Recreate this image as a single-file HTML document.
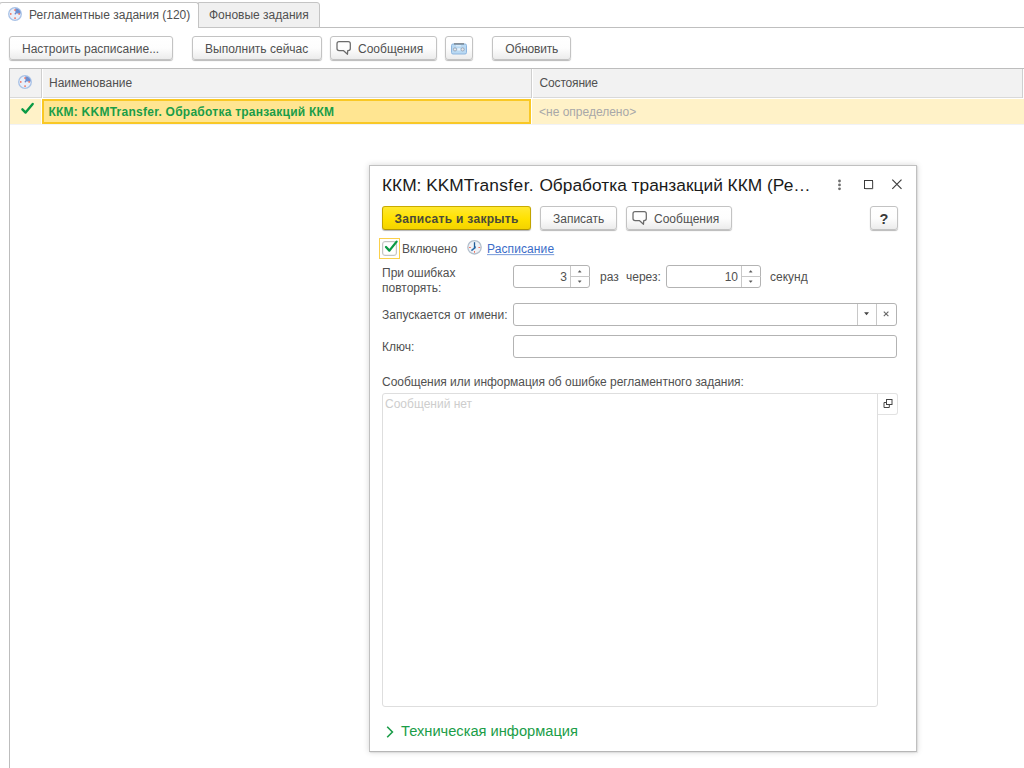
<!DOCTYPE html>
<html lang="ru">
<head>
<meta charset="utf-8">
<title>Регламентные задания</title>
<style>
*{box-sizing:border-box;margin:0;padding:0}
html,body{width:1024px;height:768px;overflow:hidden;background:#fff}
body{font-family:"Liberation Sans",Arial,sans-serif;font-size:12px;color:#505050;position:relative}
.abs{position:absolute}
.t{position:absolute;white-space:nowrap;line-height:16px;height:16px;transform:scaleY(1.07);transform-origin:0 12px}
.t.big{transform:none}
/* tabs */
#tabline{left:0;top:27px;width:1024px;height:1px;background:#bfbfbf}
#tab1{left:-1px;top:2px;width:200px;height:26px;border:1px solid #c4c4c4;border-bottom:none;border-radius:3px 3px 0 0;background:#fff}
#tab2{left:198px;top:2px;width:122px;height:26px;border:1px solid #c4c4c4;border-radius:0 3px 0 0;background:#f0f0f0}
/* buttons */
.btn{position:absolute;height:24px;border:1px solid #c3c3c3;border-radius:3px;background:linear-gradient(#ffffff 0%,#fdfdfd 50%,#ececec 100%);box-shadow:0 1px 1px rgba(0,0,0,.28);}
.btn .t{top:4px}
/* table */
#tbl{left:9px;top:68px;width:1020px;height:705px;border:1px solid #bdbdbd;background:#fff}
#thead{left:10px;top:69px;width:1014px;height:28px;background:#f2f2f2}
#theadline{left:10px;top:97px;width:1014px;height:1px;background:#d9d9d9}
.vsep{position:absolute;top:69px;width:1px;height:29px;background:#cfcfcf;box-shadow:1px 0 0 #fff}
#row{left:10px;top:99px;width:1014px;height:25px;background:#fff2c8}
#cell{left:42px;top:99px;width:489px;height:25px;border:2px solid #f9c825;background:#ffe591;box-shadow:-1px 0 0 #fff,1px 0 0 #fff}
/* dialog */
#dlg{left:369px;top:165px;width:548px;height:587px;background:#fff;border:1px solid #c0c0c0;border-bottom-color:#b6b6b6;box-shadow:0 0 6px rgba(0,0,0,.17),1px 1px 1px rgba(0,0,0,.06)}
.inp{position:absolute;height:23px;border:1px solid #b3b3b3;border-radius:3px;background:#fff}
#bsave{background:linear-gradient(#ffe830 0%,#ffe100 55%,#f3d300 100%);border-color:#c9ab00 #c2a400 #b09400 #c2a400;box-shadow:0 1px 1px rgba(0,0,0,.3)}
</style>
</head>
<body>
<!-- tabs -->
<div class="abs" id="tabline"></div>
<div class="abs" id="tab2"></div>
<div class="abs" id="tab1"></div>
<svg class="abs" style="left:7px;top:6px" width="16" height="16" viewBox="0 0 16 16"><circle cx="8" cy="8" r="6.3" fill="#e9effa" stroke="#a9c2e6" stroke-width="1.3"/><path d="M8.4 7.6V2.2A5.6 5.6 0 0 1 13.8 7.6Z" fill="#6d8fd0"/><circle cx="8.3" cy="7.7" r=".7" fill="#5577c4"/><rect x="7.3" y="3.3" width="1.5" height="1.5" fill="#f4674f"/><rect x="3" y="7.2" width="1.5" height="1.5" fill="#f4674f"/><rect x="11.4" y="7.2" width="1.5" height="1.5" fill="#f4674f"/><rect x="7.3" y="11.4" width="1.5" height="1.5" fill="#f4674f"/></svg>
<div class="t" style="left:29px;top:7px">Регламентные задания (120)</div>
<div class="t" style="left:209px;top:7px">Фоновые задания</div>

<!-- toolbar -->
<div class="btn" style="left:9px;top:36px;width:164px"><div class="t" style="left:12px">Настроить расписание...</div></div>
<div class="btn" style="left:192px;top:36px;width:130px"><div class="t" style="left:12px">Выполнить сейчас</div></div>
<div class="btn" style="left:330px;top:36px;width:107px"><svg class="abs" style="left:5px;top:3px" width="18" height="18" viewBox="0 0 18 18"><path d="M3.1 1.6H12.2Q14.3 1.6 14.3 3.7V8.6Q14.3 10.7 12.2 10.7H11.7L11.5 14.3L7.6 10.7H3.1Q1 10.7 1 8.6V3.7Q1 1.6 3.1 1.6Z" fill="none" stroke="#6a6a6a" stroke-width="1.25" stroke-linejoin="round"/></svg><div class="t" style="left:27px">Сообщения</div></div>
<div class="btn" style="left:445px;top:36px;width:28px"><svg class="abs" style="left:4px;top:6px" width="18" height="12" viewBox="0 0 18 12"><rect x="1.5" y="1" width="15" height="10" rx="1.5" fill="#b9d9f3" stroke="#8db5de" stroke-width="1"/><path d="M4 .9H14" stroke="#555" stroke-width=".9"/><rect x="6" y="2.3" width="5" height="1" fill="#e8f2fb"/><circle cx="5" cy="6.4" r="1.6" fill="#e6e9ee" stroke="#8f9bab" stroke-width=".8"/><circle cx="12.6" cy="6.4" r="1.6" fill="#e6e9ee" stroke="#8f9bab" stroke-width=".8"/><rect x="7.3" y="5.3" width="3" height="2.2" fill="#e8f2fb"/></svg></div>
<div class="btn" style="left:492px;top:36px;width:79px"><div class="t" style="left:12.3px;letter-spacing:-.18px">Обновить</div></div>

<!-- table -->
<div class="abs" id="tbl"></div>
<div class="abs" id="thead"></div>
<div class="abs" id="theadline"></div>
<div class="vsep" style="left:41px"></div>
<div class="vsep" style="left:531px"></div>
<div class="vsep" style="left:1022px"></div>
<svg class="abs" style="left:17px;top:74px" width="16" height="16" viewBox="0 0 16 16"><circle cx="8" cy="8" r="6.3" fill="#e9effa" stroke="#a9c2e6" stroke-width="1.3"/><path d="M8.4 7.6V2.2A5.6 5.6 0 0 1 13.8 7.6Z" fill="#6d8fd0"/><circle cx="8.3" cy="7.7" r=".7" fill="#5577c4"/><rect x="7.3" y="3.3" width="1.5" height="1.5" fill="#f4674f"/><rect x="3" y="7.2" width="1.5" height="1.5" fill="#f4674f"/><rect x="11.4" y="7.2" width="1.5" height="1.5" fill="#f4674f"/><rect x="7.3" y="11.4" width="1.5" height="1.5" fill="#f4674f"/></svg>
<div class="t" style="left:49px;top:75px">Наименование</div>
<div class="t" style="left:539.6px;top:75px;letter-spacing:-.18px">Состояние</div>
<div class="abs" id="row"></div>
<div class="abs" style="left:10px;top:124px;width:1014px;height:1px;background:#f1f2f6"></div>
<div class="abs" id="cell"></div>
<svg class="abs" style="left:19px;top:100px" width="18" height="18" viewBox="0 0 18 18"><path d="M3.4 9.3L6.6 12.6L13.7 4" fill="none" stroke="#0a9a45" stroke-width="2.4" stroke-linecap="round" stroke-linejoin="round"/></svg>
<div class="t" style="left:48.4px;top:104px;color:#1a9d48;font-weight:bold;letter-spacing:.25px">ККМ: KKMTransfer. Обработка транзакций ККМ</div>
<div class="t" style="left:539px;top:104px;color:#a8a8a8">&lt;не определено&gt;</div>

<!-- dialog -->
<div class="abs" id="dlg"></div>
<div class="t big" style="left:382px;top:174px;font-size:17.33px;line-height:22px;height:22px;color:#1a1a1a">ККМ: KKMTra<span style="letter-spacing:.43px">nsfer. </span>Обработка транзакций ККМ (Ре…</div>

<!-- dialog header buttons -->
<svg class="abs" style="left:836px;top:178px" width="8" height="14" viewBox="0 0 8 14"><circle cx="3.5" cy="3" r="1.4" fill="#6e6e6e"/><circle cx="3.5" cy="6.9" r="1.4" fill="#6e6e6e"/><circle cx="3.5" cy="10.8" r="1.4" fill="#6e6e6e"/></svg>
<svg class="abs" style="left:862px;top:178px" width="14" height="14" viewBox="0 0 14 14"><rect x="2.5" y="2.5" width="8" height="8" fill="none" stroke="#3a3a3a" stroke-width="1"/><path d="M11 3.5V11H3.5" fill="none" stroke="#9a9a9a" stroke-width="1" opacity=".6"/></svg>
<svg class="abs" style="left:890px;top:177px" width="14" height="14" viewBox="0 0 14 14"><path d="M2.3 2.6L11.5 11.8M11.5 2.6L2.3 11.8" stroke="#3c3c3c" stroke-width="1.15" fill="none"/></svg>

<!-- dialog command bar -->
<div class="btn" id="bsave" style="left:382px;top:206px;width:149px"><div class="t" style="left:11.4px;font-weight:bold;letter-spacing:.3px;color:#4a4a3a">Записать и закрыть</div></div>
<div class="btn" style="left:540px;top:206px;width:77px"><div class="t" style="left:12px">Записать</div></div>
<div class="btn" style="left:626px;top:206px;width:106px"><svg class="abs" style="left:5px;top:3px" width="18" height="18" viewBox="0 0 18 18"><path d="M3.1 1.6H12.2Q14.3 1.6 14.3 3.7V8.6Q14.3 10.7 12.2 10.7H11.7L11.5 14.3L7.6 10.7H3.1Q1 10.7 1 8.6V3.7Q1 1.6 3.1 1.6Z" fill="none" stroke="#6a6a6a" stroke-width="1.25" stroke-linejoin="round"/></svg><div class="t" style="left:27px">Сообщения</div></div>
<div class="btn" style="left:870px;top:206px;width:28px"><div class="t big" style="left:8.6px;top:3px;font-size:14.5px;line-height:18px;height:18px;font-weight:bold;color:#3a3a3a">?</div></div>

<!-- checkbox row -->
<div class="abs" style="left:379px;top:238px;width:21px;height:21px;border:1px solid #fbd04b"></div>
<div class="abs" style="left:382px;top:241px;width:15px;height:15px;border:1px solid #c4c4c4;border-radius:3px;background:#fff;box-shadow:inset 0 0 0 .5px rgba(0,0,0,.1)"></div>
<svg class="abs" style="left:383px;top:238px" width="16" height="16" viewBox="0 0 16 16"><path d="M3 9L6.4 12.6L13.6 3.6" fill="none" stroke="#0a9a45" stroke-width="2.3" stroke-linecap="round" stroke-linejoin="round"/></svg>
<div class="t" style="left:402px;top:241px">Включено</div>
<svg class="abs" style="left:466px;top:239px" width="17" height="17" viewBox="0 0 17 17"><circle cx="8.5" cy="8.3" r="6.7" fill="#eef2f7" stroke="#b3bfcc" stroke-width="1.3"/><path d="M8.5 3.2V9.6" stroke="#1f5c99" stroke-width="1.3" fill="none"/><path d="M9.4 8.4L5.4 11.6" stroke="#2a69a8" stroke-width="1.4" fill="none"/><path d="M8.5 8H10" stroke="#1f5c99" stroke-width="1" fill="none"/><rect x="3" y="8" width="1.8" height=".9" fill="#f4674f"/><rect x="12.4" y="8" width="1.8" height=".9" fill="#f4674f"/><rect x="8.1" y="12" width=".9" height="1.8" fill="#f4674f"/></svg>
<div class="t" style="left:487px;top:241px;color:#3a6cc8;text-decoration:underline;text-decoration-color:rgba(58,108,200,.65);letter-spacing:.1px">Расписание</div>

<!-- retry row -->
<div class="t" style="left:382px;top:265px">При ошибках</div>
<div class="t" style="left:382px;top:280px">повторять:</div>
<div class="inp" style="left:513px;top:265px;width:77px"><div class="t" style="right:22px;top:3px">3</div><svg class="abs" style="left:57px;top:0" width="19" height="21" viewBox="0 0 19 21"><path d="M7.2 6.2L8.7 4.4L10.2 6.2Z M7.2 14.8L8.7 16.6L10.2 14.8Z" fill="#555" stroke="#555" stroke-width=".4"/></svg><div class="abs" style="left:56px;top:0;width:1px;height:21px;background:#c8c8c8"></div><div class="abs" style="left:57px;top:10px;width:19px;height:1px;background:#c8c8c8"></div></div>
<div class="t" style="left:600px;top:269px">раз</div>
<div class="t" style="left:626px;top:269px">через:</div>
<div class="inp" style="left:666px;top:265px;width:95px"><div class="t" style="right:22px;top:3px">10</div><svg class="abs" style="left:75px;top:0" width="19" height="21" viewBox="0 0 19 21"><path d="M7.2 6.2L8.7 4.4L10.2 6.2Z M7.2 14.8L8.7 16.6L10.2 14.8Z" fill="#555" stroke="#555" stroke-width=".4"/></svg><div class="abs" style="left:74px;top:0;width:1px;height:21px;background:#c8c8c8"></div><div class="abs" style="left:75px;top:10px;width:19px;height:1px;background:#c8c8c8"></div></div>
<div class="t" style="left:770px;top:269px">секунд</div>

<!-- run as -->
<div class="t" style="left:382px;top:307px">Запускается от имени:</div>
<div class="inp" style="left:513px;top:303px;width:384px"><div class="abs" style="left:343px;top:0;width:1px;height:21px;background:#c8c8c8"></div><div class="abs" style="left:362px;top:0;width:1px;height:21px;background:#c8c8c8"></div><svg class="abs" style="left:344px;top:0" width="18" height="21" viewBox="0 0 18 21"><path d="M6.1 8.2H11L8.55 11.3Z" fill="#444"/></svg><svg class="abs" style="left:363px;top:0" width="19" height="21" viewBox="0 0 19 21"><path d="M6.8 7.6L11.4 12.2M11.4 7.6L6.8 12.2" stroke="#666" stroke-width="1.1" fill="none"/></svg></div>
<div class="t" style="left:382px;top:339px">Ключ:</div>
<div class="inp" style="left:513px;top:335px;width:384px"></div>

<!-- messages -->
<div class="t" style="left:382px;top:374px;letter-spacing:-.035px">Сообщения или информация об ошибке регламентного задания:</div>
<div class="abs" style="left:877px;top:393px;width:21px;height:22px;border:1px solid #e2e2e2;border-left:none;border-radius:0 3px 3px 0;background:#fff"></div>
<div class="abs" style="left:382px;top:393px;width:496px;height:314px;border:1px solid #dedede;border-radius:3px 0 3px 3px;background:#fff"></div>
<div class="t" style="left:385px;top:396px;color:#cdcdcd">Сообщений нет</div>
<svg class="abs" style="left:881px;top:397px" width="14" height="14" viewBox="0 0 14 14"><rect x="5.5" y="2.5" width="5.5" height="5" fill="#fff" stroke="#444" stroke-width="1"/><path d="M5.5 5.5H3V10.5H8.3V8" fill="none" stroke="#444" stroke-width="1"/></svg>

<!-- tech info -->
<svg class="abs" style="left:384px;top:724px" width="12" height="16" viewBox="0 0 12 16"><path d="M3.2 2.8L8.4 8L3.2 13.2" fill="none" stroke="#1a9d48" stroke-width="1.6"/></svg>
<div class="t big" style="left:401px;top:722px;font-size:14.67px;line-height:18px;height:18px;color:#1a9d48">Техническая информация</div>

</body>
</html>
